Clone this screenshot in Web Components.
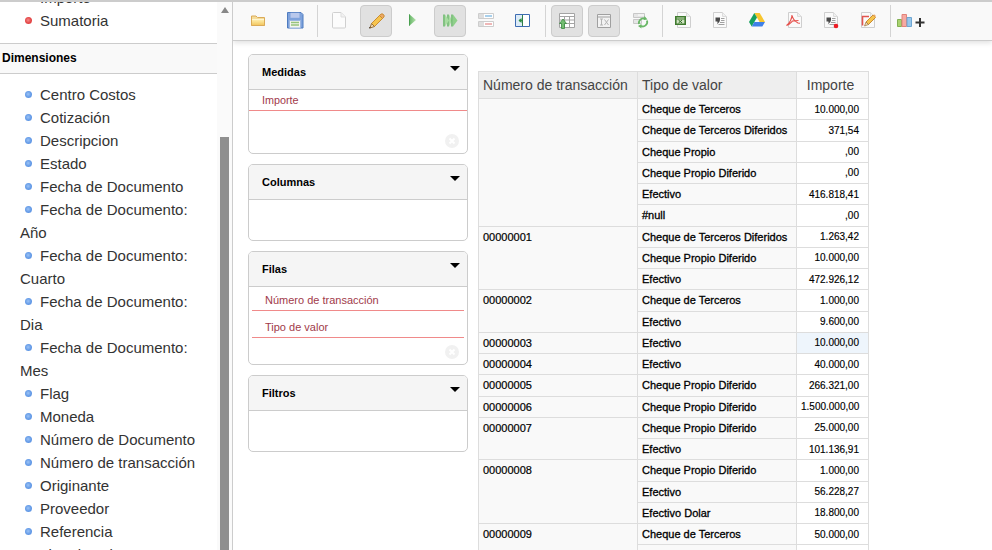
<!DOCTYPE html>
<html lang="es"><head><meta charset="utf-8"><title>Pivot</title>
<style>
html,body{margin:0;padding:0;height:100%;background:#fff;overflow:hidden}
body{font-family:"Liberation Sans",Arial,sans-serif}
</style></head><body>
<app-shell>
  <side-list slot="side"></side-list>
  <tool-bar slot="bar"></tool-bar>
  <field-panel slot="panels" name="Medidas" h="100" clear><field-pill flush>Importe</field-pill></field-panel>
  <field-panel slot="panels" name="Columnas" h="77"></field-panel>
  <field-panel slot="panels" name="Filas" h="114" clear><field-pill>Número de transacción</field-pill><field-pill>Tipo de valor</field-pill></field-panel>
  <field-panel slot="panels" name="Filtros" h="77"></field-panel>
  <pivot-table slot="table"></pivot-table>
</app-shell>
<script>
function def(name, css, html, init){
  customElements.define(name, class extends HTMLElement{
    connectedCallback(){
      if(this.shadowRoot) return;
      const r=this.attachShadow({mode:'open'});
      r.innerHTML='<style>'+css+'</style>'+(typeof html==='function'?html(this):html);
      if(init) init(this,r);
    }
  });
}
def('app-shell',`
:host{display:flex;flex-direction:column;height:550px;overflow:hidden}
.strip{height:2px;background:#ccc;flex:none}
.row{flex:1;display:flex;min-height:0}
.side{width:233px;flex:none;display:flex;overflow:hidden}
.main{flex:1;min-width:0;display:flex;flex-direction:column;overflow:hidden}
.work{flex:1;display:flex;min-height:0;overflow:hidden;padding:13px 0 0 15px;gap:10px;align-items:flex-start}
.col{width:220px;flex:none;display:flex;flex-direction:column;gap:10px}
`,`<div class="strip"></div><div class="row"><div class="side"><slot name="side"></slot></div>
<div class="main"><slot name="bar"></slot><div class="work"><div class="col"><slot name="panels"></slot></div><slot name="table"></slot></div></div></div>`);

const dims=['Centro Costos','Cotización','Descripcion','Estado','Fecha de Documento','Fecha de Documento: Año','Fecha de Documento: Cuarto','Fecha de Documento: Dia','Fecha de Documento: Mes','Flag','Moneda','Número de Documento','Número de transacción','Originante','Proveedor','Referencia','Tipo de valor'];
def('side-list',`
:host{display:flex;width:233px;height:548px;overflow:hidden;color:#333;font-size:15px}
.pane{width:217px;flex:none;overflow:hidden}
.in{margin-top:-16px}
ul{list-style:none;margin:0;padding:0 0 0 20px;width:178px}
li{line-height:23px;text-indent:20px;position:relative}
li i{position:absolute;left:5px;top:8px;width:7px;height:7px;border-radius:50%;background:radial-gradient(circle at 45% 45%,#9cc3f5 0,#5f97e6 60%,#9fbce6 100%)}
li.m i{background:radial-gradient(circle at 45% 45%,#f58a8a 0,#e23f3f 60%,#eda0a0 100%)}
h3{margin:11px 0 9px;height:29px;line-height:28px;border:solid #ccc;border-width:1px 0;background:#f9f9f9;font-size:12px;font-weight:bold;color:#000;padding-left:2px}
.bar{width:15px;flex:none;background:#fafafa;display:flex;flex-direction:column;align-items:center}
.up{width:0;height:0;border:solid transparent;border-width:0 4.5px 6px;border-bottom-color:#888;margin-top:5px}
.th{margin-top:124px;width:9px;flex:1;background:#8f8f8f}
.gap{width:1px;flex:none;background:#ccc}
`,`<div class="pane"><div class="in"><ul><li class="m"><i></i>Importe</li><li class="m"><i></i>Sumatoria</li></ul><h3>Dimensiones</h3><ul>${dims.map(d=>`<li><i></i>${d}</li>`).join('')}</ul></div></div><div class="bar"><div class="up"></div><div class="th"></div></div><div class="gap"></div>`);

const PAGE=(a,b)=>`<path d="M${a+.5} .5h${b-a-5}l4 4v11h-${b-a-1}z" fill="#fafafa" stroke="#cfcfcf"/><path d="M${b-4.5} .5v4h4" fill="#f0f0f0" stroke="#dcdcdc"/>`;
const COMMA=`<path d="M3.500 5.500h4.500v2.500q0 2.700-3.200 4.500q1.200-1.700.6-3H3.500z" fill="#4a4a4a"/><path d="M9 6.500h3.500M9 8.500h3.500M8 10.500h4.500M6.500 12.500h6" stroke="#a0a0a0"/>`;
const I={
open:`<path d="M2.500 13.500v-9.500h4.500l1.500 1.500h7v8z" fill="#f5dc9a" stroke="#dbab58"/><path d="M3 7.500h12v5.500h-12z" fill="url(#yg)"/><path d="M3 7.500h12" stroke="#fff6d0"/><path d="M2.500 13.500h13" stroke="#dbab58"/>`,
save:`<path d="M1.500 .5h13.500l2 2v13.500h-15.500z" fill="#7ea2dc" stroke="#4f7cc0"/><path d="M4.500 .8h9v5h-9z" fill="#b9c8ec"/><path d="M3.500 8.500h11v7.500h-11z" fill="#f4f6ee" stroke="#9db7e0"/><path d="M5 10.500h8M5 13h8" stroke="#96c47c" stroke-width="1.500"/>`,
doc:`<path d="M2.500 1.500q0-1 1-1h7.500l4.500 4.500v10q0 1-1 1h-11q-1 0-1-1z" fill="#fcfcfc" stroke="#d0d0d0"/><path d="M11 .5v4.500h4.500" fill="#f2f2f2" stroke="#dedede"/>`,
pencil:`<path d="M13.500 2.500l3 3-9 9-3-3z" fill="#f6c44d" stroke="#c98c33"/><path d="M13 3l3 3" stroke="#fff" stroke-width=".5"/><path d="M13.500 2.500q1.500-1.500 3 0t0 3l-1 1-3-3z" fill="#eca866" stroke="#c98c33"/><path d="M4.500 11.500l3 3-4.500 1.500z" fill="#f2dcb6" stroke="#9a7038"/><path d="M2 16.500l1.800-.5-1.300-1.300z" fill="#3a2a18"/>`,
play:`<path d="M5 2l7 6-7 6z" fill="url(#gg)"/><path d="M5.500 2.500v11" stroke="#4aa050"/>`,
fast:`<path d="M3 2.500v12M7 2.500v12" stroke="#63b763" stroke-width="1.500"/><path d="M4 2.500l4 6-4 6z" fill="#a7dca0"/><path d="M8 2.500l3 6-3 6z" fill="#a7dca0"/><path d="M11 2.500v12" stroke="#63b763" stroke-width="1.500"/><path d="M12 2.500l4.500 6-4.500 6z" fill="#8ed089"/>`,
rows:`<path d="M.5 1.500h15v5h-15zM.5 9.500h15v5h-15z" fill="#fff" stroke="#cdcdcd"/><path d="M1 2h5v4h-5zM1 10h5v4h-5z" fill="#dedede"/><path d="M7 3h7v2h-7z" fill="#a9d0ec"/><path d="M7 11h7v2h-7z" fill="#efb7b7"/>`,
panel:`<path d="M.5 2.500h14v12h-14z" fill="#fff" stroke="#3e6db3"/><path d="M1 3h6.500v11h-6.500z" fill="#dcebf7"/><path d="M7.500 3v11" stroke="#2f7f4a"/><path d="M6.500 6v5l-3-2.500z" fill="#2f8f44"/><path d="M4 7.700h3v1.600h-3z" fill="#2f8f44"/>`,
tblup:`<path d="M1.500 1.500h15v14h-15z" fill="#fff" stroke="#a4a4a4"/><path d="M1.500 4.500h15M1.500 8h15M1.500 11.500h15M6.500 4.500v11M11.500 4.500v11" stroke="#a4a4a4"/><path d="M5 7l3.500 4.500h-2v5h-3v-5h-2z" fill="#74bd72" stroke="#3a8a40" stroke-width=".8"/>`,
fx:`<path d="M2.500 2.500h13v13h-13z" fill="#f2f2f2" stroke="#a0a0a0"/><path d="M2.500 5h13" stroke="#a0a0a0"/><path d="M5 7h3M6.500 7v6M5 13h3M9.500 7.500l4 5.500M13.500 7.500l-4 5.500" fill="none" stroke="#b4b4b4"/>`,
rowsr:`<path d="M1.500 1.500h11v4h-11zM1.500 7.500h8v4h-8z" fill="#e6e6e6" stroke="#c8c8c8"/><path d="M6 3h6M6 9h3" stroke="#fff"/><path d="M15 8.500a4.500 4.500 0 0 1-6.500 5.300M7 12a4.500 4.500 0 0 1 6.500-5" fill="none" stroke="#69b766" stroke-width="1.800"/><path d="M12.500 4l3 3.500-4 .5zM9.500 16.500l-3.500-2.500 3.500-2z" fill="#69b766"/>`,
xls:PAGE(2,16)+`<path d="M.8 4.800h9.400v7.400H.8z" fill="#cfe3c1" stroke="#3f7a2f" stroke-width="1.600"/><path d="M1 7h9" stroke="#3f7a2f"/><path d="M3.500 8l3.500 3M7 8l-3.500 3" stroke="#2e6a22"/>`,
rtf:PAGE(1,15)+COMMA,
drive:`<path d="M5.300 1h5.400l5.300 9h-5.400z" fill="#f8c62f"/><path d="M5.300 1l2.700 4.600-5.300 9-2.700-4.600z" fill="#15a05f"/><path d="M2.700 14.600l2.700-4.600h10.600l-2.700 4.600z" fill="#3f80e8"/>`,
pdf:PAGE(2,16)+`<path d="M6 3c.5 3 2 6 6 8l2 .2M6 3c0 3-2 8-5.500 10.500c2.500-.5 4.500-3 6-4.500l6-.5" fill="none" stroke="#e6514c" stroke-width="1.100"/>`,
rtfr:PAGE(1,15)+COMMA+`<circle cx="13" cy="14" r="2.300" fill="#ee1c25"/>`,
pen2:PAGE(1,15)+`<path d="M9 4.500h-6.500v9" fill="none" stroke="#e2554f" stroke-width="1.600"/><path d="M13 3l2.500 2.500-7 7-2.500-2.500z" fill="#f6c44d" stroke="#c98c33"/><path d="M13 3q1-1 2-.2t.5 2.700l-2.500-2.500z" fill="#eca866"/><path d="M6 10l2.500 2.500-4 1.500z" fill="#f2dcb6" stroke="#9a7038" stroke-width=".7"/>`,
chart:`<path d="M.5 7.500h4v7h-4z" fill="#a9d26f" stroke="#82b053"/><path d="M5 2.500h4.500v12h-4.500z" fill="#f6aaa2" stroke="#e3827a"/><path d="M10 5.500h4.500v9h-4.500z" fill="#97c7ec" stroke="#6fa6d2"/><path d="M23 6v9M18.500 10.500h9" stroke="#333" stroke-width="2"/>`
};
def('tool-icon',`:host{display:flex;flex:none;align-items:center;justify-content:center;width:32px;height:32px;box-sizing:border-box;border:1px solid transparent;border-radius:4px}
:host([on]){background:#e1e1e1;border-color:#ccc}
svg{display:block;overflow:visible;flex:none}`,
h=>{const w=h.getAttribute('w')||18;return `<svg width="${w}" height="18" viewBox="0 0 ${w} 18" aria-hidden="true"><defs><linearGradient id="yg" x1="0" y1="0" x2="0" y2="1"><stop offset="0" stop-color="#fff0b0"/><stop offset="1" stop-color="#f3c862"/></linearGradient><linearGradient id="gg" x1="0" y1="0" x2="1" y2="0"><stop offset="0" stop-color="#62b364"/><stop offset="1" stop-color="#b6e2ad"/></linearGradient></defs>${I[h.getAttribute('i')]}</svg>`});

def('tool-bar',`
:host{display:flex;align-items:center;height:38px;flex:none;box-sizing:content-box;background:#f9f9f9;border-bottom:1px solid #ccc;box-shadow:0 2px 5px rgba(0,0,0,.12);padding-left:9px;position:relative}
.g{display:flex;align-items:center;gap:5px}
.s{width:1px;height:32px;background:#d4d4d4;margin:0 5px;flex:none}
.s.f{margin-left:6px}
`,`<div class="g"><tool-icon i="open"></tool-icon><tool-icon i="save"></tool-icon></div><div class="s f"></div>
<div class="g"><tool-icon i="doc"></tool-icon><tool-icon i="pencil" on></tool-icon><tool-icon i="play"></tool-icon><tool-icon i="fast" on></tool-icon><tool-icon i="rows"></tool-icon><tool-icon i="panel"></tool-icon></div><div class="s"></div>
<div class="g"><tool-icon i="tblup" on></tool-icon><tool-icon i="fx" on></tool-icon><tool-icon i="rowsr"></tool-icon></div><div class="s"></div>
<div class="g"><tool-icon i="xls"></tool-icon><tool-icon i="rtf"></tool-icon><tool-icon i="drive"></tool-icon><tool-icon i="pdf"></tool-icon><tool-icon i="rtfr"></tool-icon><tool-icon i="pen2"></tool-icon></div><div class="s"></div>
<tool-icon i="chart" w="30"></tool-icon>`);

def('field-panel',`
:host{display:flex;flex-direction:column;box-sizing:border-box;width:220px;border:1px solid #ccc;border-radius:5px;overflow:hidden;background:#fff;position:relative;flex:none}
header{height:34px;flex:none;box-sizing:content-box;background:#f5f5f5;border-bottom:1px solid #ccc;display:flex;justify-content:space-between;font:bold 11px "Liberation Sans",sans-serif;color:#000;line-height:35px;padding:0 7px 0 13px}
.t{width:0;height:0;border:solid transparent;border-width:5px 5px 0;border-top-color:#000;margin-top:11px}
.body{flex:1;min-height:0}
.x{position:absolute;right:8px;bottom:5px;width:14px;height:14px}
`,h=>`<header><span>${h.getAttribute('name')}</span><span class="t"></span></header><div class="body"><slot></slot></div>`+(h.hasAttribute('clear')?`<svg class="x" viewBox="0 0 14 14" aria-hidden="true"><circle cx="7" cy="7" r="7" fill="#f1f1f1"/><path d="M4.500 4.500l5 5M9.500 4.500l-5 5" stroke="#fff" stroke-width="2"/></svg>`:''),
(h,r)=>{h.style.height=h.getAttribute('h')+'px'});

def('field-pill',`
:host{display:block;margin:0 3px;height:20px;padding-top:6px;line-height:20px;box-sizing:content-box;border-bottom:1px solid #f08a8a;color:#a13a4a;font-size:11px;padding-left:13px}
:host(:first-child){padding-top:3px}
:host([flush]){margin:0;padding-top:0;height:20px;line-height:21px;padding-left:13px;font-size:10.8px}
`,`<slot></slot>`);

const rows=[
['',6,'Cheque de Terceros','10.000,00'],[0,0,'Cheque de Terceros Diferidos','371,54'],[0,0,'Cheque Propio',',00'],[0,0,'Cheque Propio Diferido',',00'],[0,0,'Efectivo','416.818,41'],[0,0,'#null',',00'],
['00000001',3,'Cheque de Terceros Diferidos','1.263,42'],[0,0,'Cheque Propio Diferido','10.000,00'],[0,0,'Efectivo','472.926,12'],
['00000002',2,'Cheque de Terceros','1.000,00'],[0,0,'Efectivo','9.600,00'],
['00000003',1,'Efectivo','10.000,00','hl'],
['00000004',1,'Efectivo','40.000,00'],
['00000005',1,'Cheque Propio Diferido','266.321,00'],
['00000006',1,'Cheque Propio Diferido','1.500.000,00'],
['00000007',2,'Cheque Propio Diferido','25.000,00'],[0,0,'Efectivo','101.136,91'],
['00000008',3,'Cheque Propio Diferido','1.000,00'],[0,0,'Efectivo','56.228,27'],[0,0,'Efectivo Dolar','18.800,00'],
['00000009',2,'Cheque de Terceros','50.000,00'],[0,0,'','']
];
def('pivot-table',`
:host{display:block;flex:none;width:390px;margin-top:17px}
table{border-collapse:collapse;table-layout:fixed;width:390px;color:#000}
col.a,col.b{width:159px}col.c{width:72px}
th,td{border:1px solid #ddd;padding:0 5px 0 4px;height:21.25px;box-sizing:border-box;white-space:nowrap;overflow:hidden}
th{height:27px;background:#eee;font-weight:normal;font-size:14px;color:#444;text-align:left}
th.c{background:#f9f9f9;text-align:center;padding:0 9px 0 5px}
td{background:#f9f9f9}
td.v{font-size:11px;color:#000;-webkit-text-stroke:.3px #000}
td.k{vertical-align:top;line-height:20px;font-size:11px;-webkit-text-stroke:.2px #000}
td.n{background:#fff;text-align:right;padding-right:9px;font-size:10px;-webkit-text-stroke:.15px #000}
td.hl{background:#eef5fc}
`,`<table><colgroup><col class="a"><col class="b"><col class="c"></colgroup><thead><tr><th>Número de transacción</th><th>Tipo de valor</th><th class="c">Importe</th></tr></thead><tbody>${rows.map(r=>`<tr>${r[1]?`<td class="k" rowspan="${r[1]}">${r[0]}</td>`:''}<td class="v">${r[2]}</td><td class="n ${r[4]||''}">${r[3]}</td></tr>`).join('')}</tbody></table>`);
</script>
</body></html>
